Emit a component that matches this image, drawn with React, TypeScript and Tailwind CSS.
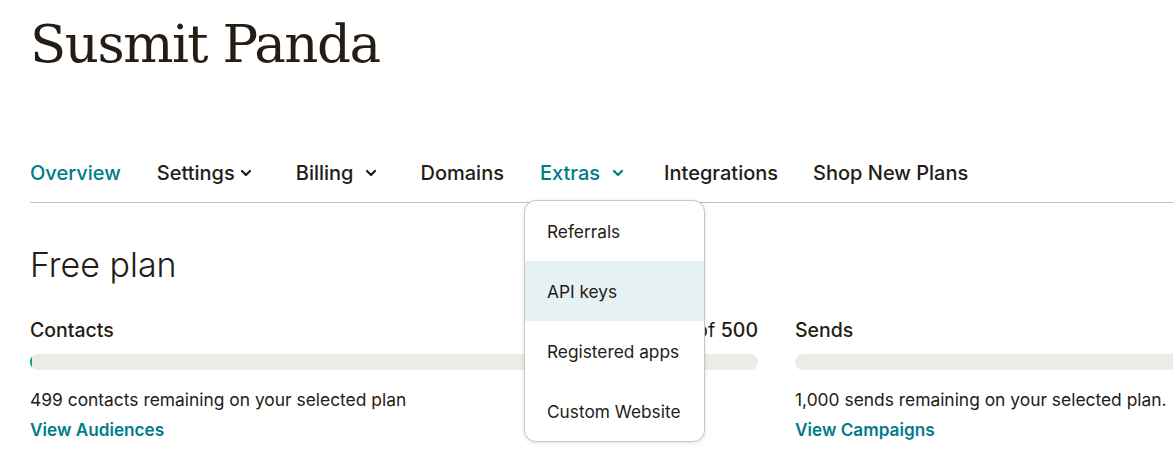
import React from "react";

const Chevron = ({ color }: { color: string }) => (
  <svg width="12" height="8" viewBox="0 0 12 8" fill="none">
    <path d="M2 2 L6 6 L10 2" stroke={color} strokeWidth="2.2" strokeLinecap="round" strokeLinejoin="round" />
  </svg>
);

export default function App() {
  const sans = { fontFamily: "Inter, 'Noto Sans', sans-serif" };
  return (
    <div className="relative w-[1173px] h-[470px] overflow-hidden bg-white text-[#241c15]" style={sans}>
      <div className="pl-[30px]">
        <h1
          className="pt-[13px] text-[53px] leading-[62px] text-[#241c15] tracking-[-1.5px]"
          style={{ fontFamily: "'DejaVu Serif', serif" }}
        >
          Susmit Panda
        </h1>
        <nav className="mt-[85px] flex items-center h-[26px] text-[20px] font-medium">
          <span className="text-[#007c89]">Overview</span>
          <span className="ml-[36px] flex items-center">
            Settings
            <span className="ml-[5px]"><Chevron color="#241c15" /></span>
          </span>
          <span className="ml-[44px] flex items-center">
            Billing
            <span className="ml-[12px]"><Chevron color="#241c15" /></span>
          </span>
          <span className="ml-[43px]">Domains</span>
          <span className="ml-[36px] flex items-center text-[#007c89]">
            Extras
            <span className="ml-[12px]"><Chevron color="#007c89" /></span>
          </span>
          <span className="ml-[40px]">Integrations</span>
          <span className="ml-[35px]">Shop New Plans</span>
        </nav>
        <div className="mt-[16px] h-px bg-[#bfbfbf]" />
        <h2 className="mt-[42px] text-[34px] leading-[40px] font-light">Free plan</h2>
        <div className="mt-[34px] flex gap-[37px]">
          <div className="w-[728px] shrink-0">
            <div className="flex justify-between items-center h-[24px] text-[19.5px]">
              <span className="font-medium">Contacts</span>
              <span>
                <span className="font-medium">1</span> of <span className="font-medium">500</span>
              </span>
            </div>
            <div className="mt-[11px] h-[16px] rounded-full bg-[#edebe7] overflow-hidden">
              <div className="h-full w-[2px] bg-[#00a36e]" />
            </div>
            <p className="mt-[19px] text-[17.4px] leading-[22px]">499 contacts remaining on your selected plan</p>
            <p className="mt-[8px] text-[17.2px] leading-[22px] font-semibold text-[#007c89]">View Audiences</p>
          </div>
          <div className="w-[728px] shrink-0">
            <div className="flex items-center h-[24px] text-[19.5px]">
              <span className="font-medium">Sends</span>
            </div>
            <div className="mt-[11px] h-[16px] rounded-full bg-[#edebe7]" />
            <p className="mt-[19px] text-[17.4px] leading-[22px]">1,000 sends remaining on your selected plan.</p>
            <p className="mt-[8px] text-[17.2px] leading-[22px] font-semibold text-[#007c89]">View Campaigns</p>
          </div>
        </div>
      </div>

      <div className="absolute left-[524px] top-[200px] w-[181px] h-[242px] rounded-[12px] border border-[#c6c6c6] bg-white shadow-[0_1px_4px_rgba(0,0,0,0.12)] overflow-hidden text-[17.3px]">
        <div className="h-[60px] flex items-center pl-[22px] pt-[2px]">Referrals</div>
        <div className="h-[60px] flex items-center pl-[22px] pt-[2px] bg-[#e6f1f3]">API keys</div>
        <div className="h-[60px] flex items-center pl-[22px] pt-[2px]">Registered apps</div>
        <div className="h-[60px] flex items-center pl-[22px] pt-[2px]">Custom Website</div>
      </div>
    </div>
  );
}
